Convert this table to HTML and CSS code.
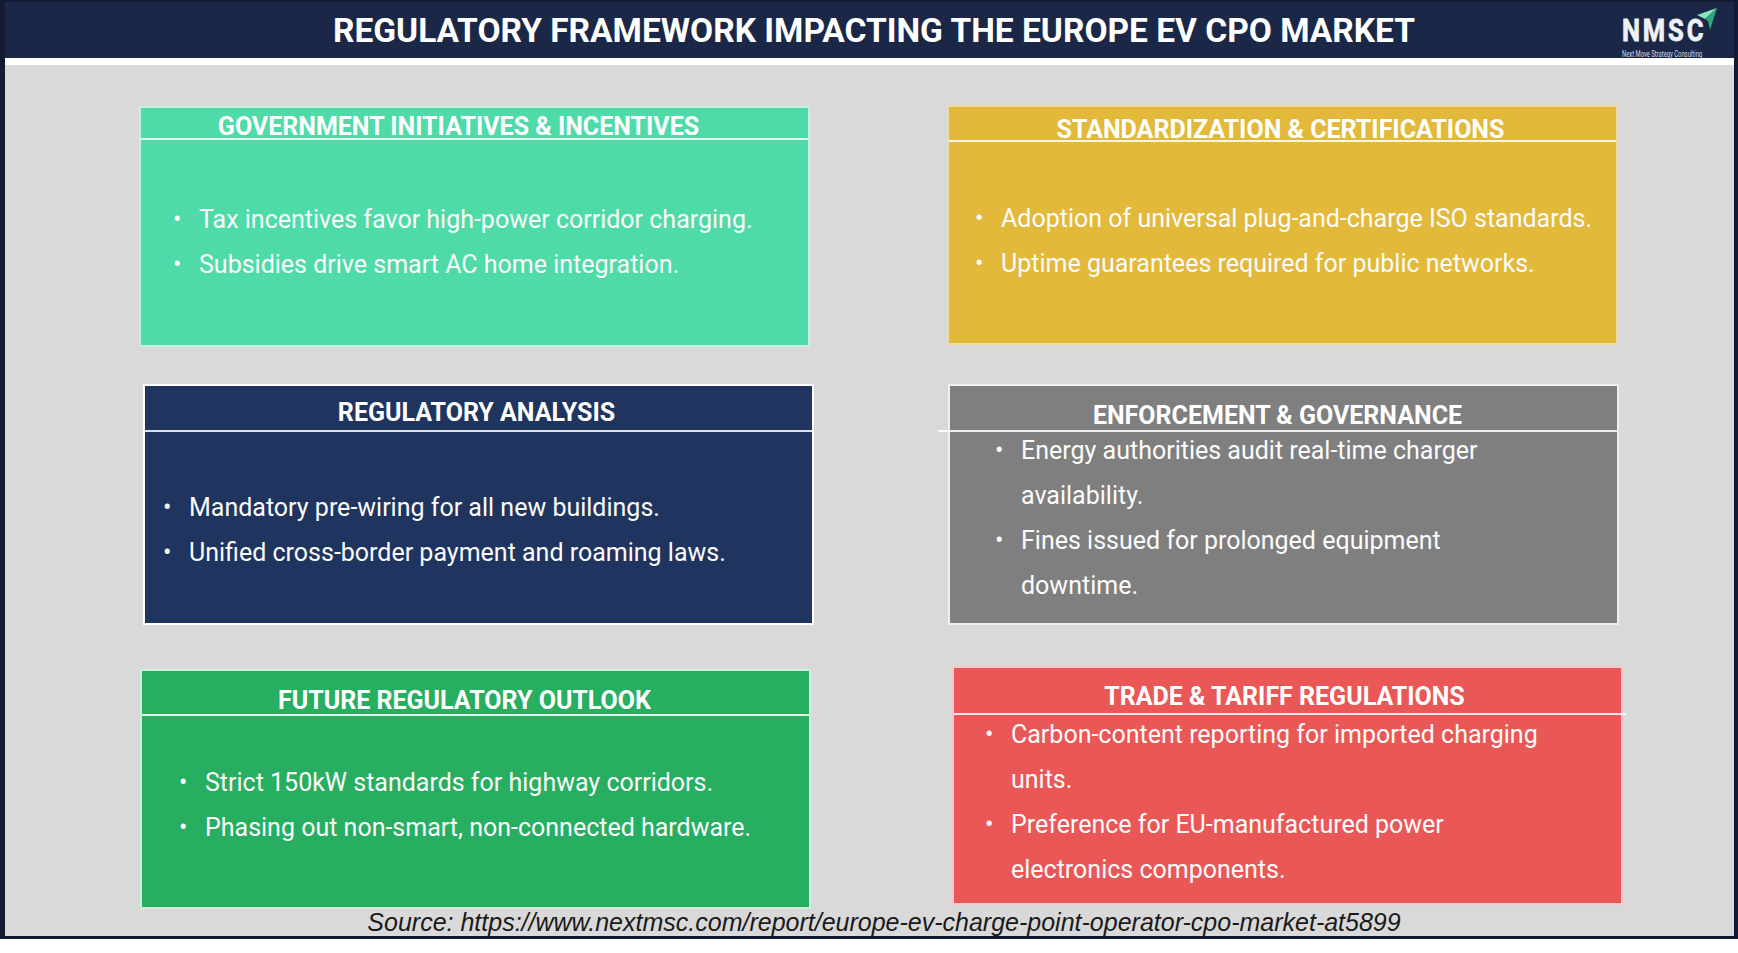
FILE: index.html
```html
<!DOCTYPE html>
<html lang="en">
<head>
<meta charset="utf-8">
<title>Regulatory Framework Impacting the Europe EV CPO Market</title>
<link rel="stylesheet" href="styles.css">
</head>
<body>
<div class="frame">
  <header class="topbar">
    <h1 class="title">REGULATORY FRAMEWORK IMPACTING THE EUROPE EV CPO MARKET</h1>
    <div class="logo">
      <div class="logo-text">
        <div class="logo-mark"><span>NMSC</span></div>
        <div class="logo-tag"><span>Next Move Strategy Consulting</span></div>
      </div>
      <svg class="logo-plane" viewBox="0 0 20 22" width="20" height="22" aria-hidden="true">
        <polygon points="0,7 20,0 8,11" fill="#86e6c0"/>
        <polygon points="8,11 20,0 13,22 11,13" fill="#2fa57c"/>
      </svg>
    </div>
  </header>

  <main class="board">
    <section class="grid">
      <article class="card c-teal">
        <h2 class="card-head">GOVERNMENT INITIATIVES &amp; INCENTIVES</h2>
        <div class="rule"></div>
        <ul class="card-body">
          <li>Tax incentives favor high-power corridor charging.</li>
          <li>Subsidies drive smart AC home integration.</li>
        </ul>
      </article>

      <article class="card c-yellow">
        <h2 class="card-head">STANDARDIZATION &amp; CERTIFICATIONS</h2>
        <div class="rule"></div>
        <ul class="card-body">
          <li>Adoption of universal plug-and-charge ISO standards.</li>
          <li>Uptime guarantees required for public networks.</li>
        </ul>
      </article>

      <article class="card c-navy">
        <h2 class="card-head">REGULATORY ANALYSIS</h2>
        <div class="rule"></div>
        <ul class="card-body">
          <li>Mandatory pre-wiring for all new buildings.</li>
          <li>Unified cross-border payment and roaming laws.</li>
        </ul>
      </article>

      <article class="card c-gray">
        <h2 class="card-head">ENFORCEMENT &amp; GOVERNANCE</h2>
        <div class="rule"></div>
        <ul class="card-body">
          <li><span>Energy authorities audit real-time charger<br>availability.</span></li>
          <li><span>Fines issued for prolonged equipment<br>downtime.</span></li>
        </ul>
      </article>

      <article class="card c-green">
        <h2 class="card-head">FUTURE REGULATORY OUTLOOK</h2>
        <div class="rule"></div>
        <ul class="card-body">
          <li>Strict 150kW standards for highway corridors.</li>
          <li>Phasing out non-smart, non-connected hardware.</li>
        </ul>
      </article>

      <article class="card c-red">
        <h2 class="card-head">TRADE &amp; TARIFF REGULATIONS</h2>
        <div class="rule"></div>
        <ul class="card-body">
          <li><span>Carbon-content reporting for imported charging<br>units.</span></li>
          <li><span>Preference for EU-manufactured power<br>electronics components.</span></li>
        </ul>
      </article>
    </section>

    <p class="source">Source: https://www.nextmsc.com/report/europe-ev-charge-point-operator-cpo-market-at5899</p>
  </main>
</div>
</body>
</html>
```

FILE: styles.css
```css
* {
  box-sizing: border-box;
  margin: 0;
  padding: 0;
}

html, body {
  background: #ffffff;
}

body {
  font-family: Roboto, "Liberation Sans", sans-serif;
  width: 1738px;
  height: 953px;
  overflow: hidden;
}

.frame {
  width: 1738px;
  height: 939px;
  border-style: solid;
  border-color: #121b33;
  border-width: 2px 4px 3px 5px;
  display: flex;
  flex-direction: column;
}

/* ---------- top bar ---------- */
.topbar {
  height: 63px;
  flex: none;
  background: #1b2746;
  border-bottom: 7px solid #ffffff;
  display: grid;
  grid-template-columns: 1fr auto 1fr;
}

.title {
  grid-column: 2;
  padding-left: 9px;
  padding-top: 1px;
  font-family: Roboto, "Liberation Sans", sans-serif;
  font-weight: 700;
  font-size: 33.5px;
  line-height: 56px;
  color: #ffffff;
  white-space: nowrap;
}

.logo {
  grid-column: 3;
  justify-self: end;
  align-self: start;
  margin-right: 17px;
  display: flex;
  align-items: flex-start;
}

.logo-text {
  margin-top: 15px;
  width: 80px;
}

.logo-mark {
  height: 26px;
  line-height: 26px;
  white-space: nowrap;
}

.logo-mark span {
  display: inline-block;
  font-family: Roboto, "Liberation Sans", sans-serif;
  font-weight: 700;
  font-size: 32px;
  letter-spacing: 3.5px;
  color: #eef1f5;
  -webkit-text-stroke: 0.8px #eef1f5;
  transform: scaleX(0.8);
  transform-origin: left center;
}

.logo-tag {
  margin-top: 4px;
  height: 9px;
  line-height: 9px;
  white-space: nowrap;
}

.logo-tag span {
  display: inline-block;
  font-size: 9px;
  color: #d8dce2;
  transform: scaleX(0.65);
  transform-origin: left center;
}

.logo-plane {
  margin-top: 6px;
  margin-left: -5px;
  flex: none;
}

/* ---------- board ---------- */
.board {
  flex: 1;
  background: #d9d9d9;
  padding-top: 42px;
}

.grid {
  margin-left: 136px;
  display: grid;
  grid-template-columns: 667px 667px;
  grid-template-rows: 237px 237px 237px;
  column-gap: 141px;
  row-gap: 42px;
}

.card {
  align-self: start;
  justify-self: start;
  width: 667px;
  display: flex;
  flex-direction: column;
  background: var(--bg);
  box-shadow: 0 0 0 2px var(--edge);
  color: #fbfbfb;
}

.card-head {
  flex: none;
  height: var(--hh);
  padding-top: var(--ht);
  padding-right: var(--hx);
  display: flex;
  align-items: center;
  justify-content: center;
  font-family: Roboto, "Liberation Sans", sans-serif;
  font-weight: 700;
  font-size: 25px;
  color: #ffffff;
  white-space: nowrap;
}

.rule {
  flex: none;
  height: 2px;
  background: rgba(255, 255, 255, 0.85);
}

.card-body {
  flex: 1;
  min-height: 0;
  list-style: none;
  display: flex;
  flex-direction: column;
  justify-content: center;
  padding-left: var(--pl);
  padding-top: var(--pt, 0px);
  padding-bottom: var(--pb, 0px);
}

.card-body li {
  display: flex;
  font-size: 25px;
  line-height: 45px;
  white-space: nowrap;
}

.card-body li::before {
  content: "\2022";
  flex: none;
  width: 26px;
}

.c-teal {
  --bg: #4edba8;
  --edge: #c4f1df;
  --hh: 30px;
  --ht: 7px;
  --hx: 32px;
  --pl: 32px;
  --pb: 2px;
  height: 237px;
  margin-top: 1px;
}

.c-yellow {
  --bg: #e2b93a;
  --edge: #f0dca0;
  --hh: 33px;
  --ht: 11px;
  --hx: 4px;
  --pl: 26px;
  --pb: 4px;
  height: 236px;
}

.c-navy {
  --bg: #1f3560;
  --edge: #ffffff;
  --hh: 44px;
  --ht: 9px;
  --hx: 4px;
  --pl: 18px;
  --pt: 4px;
  height: 237px;
  margin-left: 4px;
}

.c-gray {
  --bg: #7f7f7f;
  --edge: #efefef;
  --hh: 44px;
  --ht: 14px;
  --hx: 12px;
  --pl: 45px;
  --pb: 20px;
  height: 237px;
  margin-left: 1px;
}

.c-gray .rule {
  margin-left: -12px;
}

.c-green {
  --bg: #28ae60;
  --edge: #cdeedb;
  --hh: 43px;
  --ht: 16px;
  --hx: 22px;
  --pl: 37px;
  --pb: 13px;
  height: 236px;
  margin-top: 6px;
  margin-left: 1px;
}

.c-red {
  --bg: #ea5757;
  --edge: #f3c9c9;
  --hh: 45px;
  --ht: 12px;
  --hx: 6px;
  --pl: 31px;
  --pb: 15px;
  height: 235px;
  margin-top: 3px;
  margin-left: 5px;
}

.c-red .rule {
  margin-right: -5px;
}

/* ---------- source ---------- */
.source {
  margin-top: 6px;
  padding-left: 29px;
  text-align: center;
  font-family: "Liberation Sans", Arial, sans-serif;
  font-style: italic;
  font-size: 25px;
  line-height: 28px;
  color: #1a1a1a;
  white-space: nowrap;
}
```
